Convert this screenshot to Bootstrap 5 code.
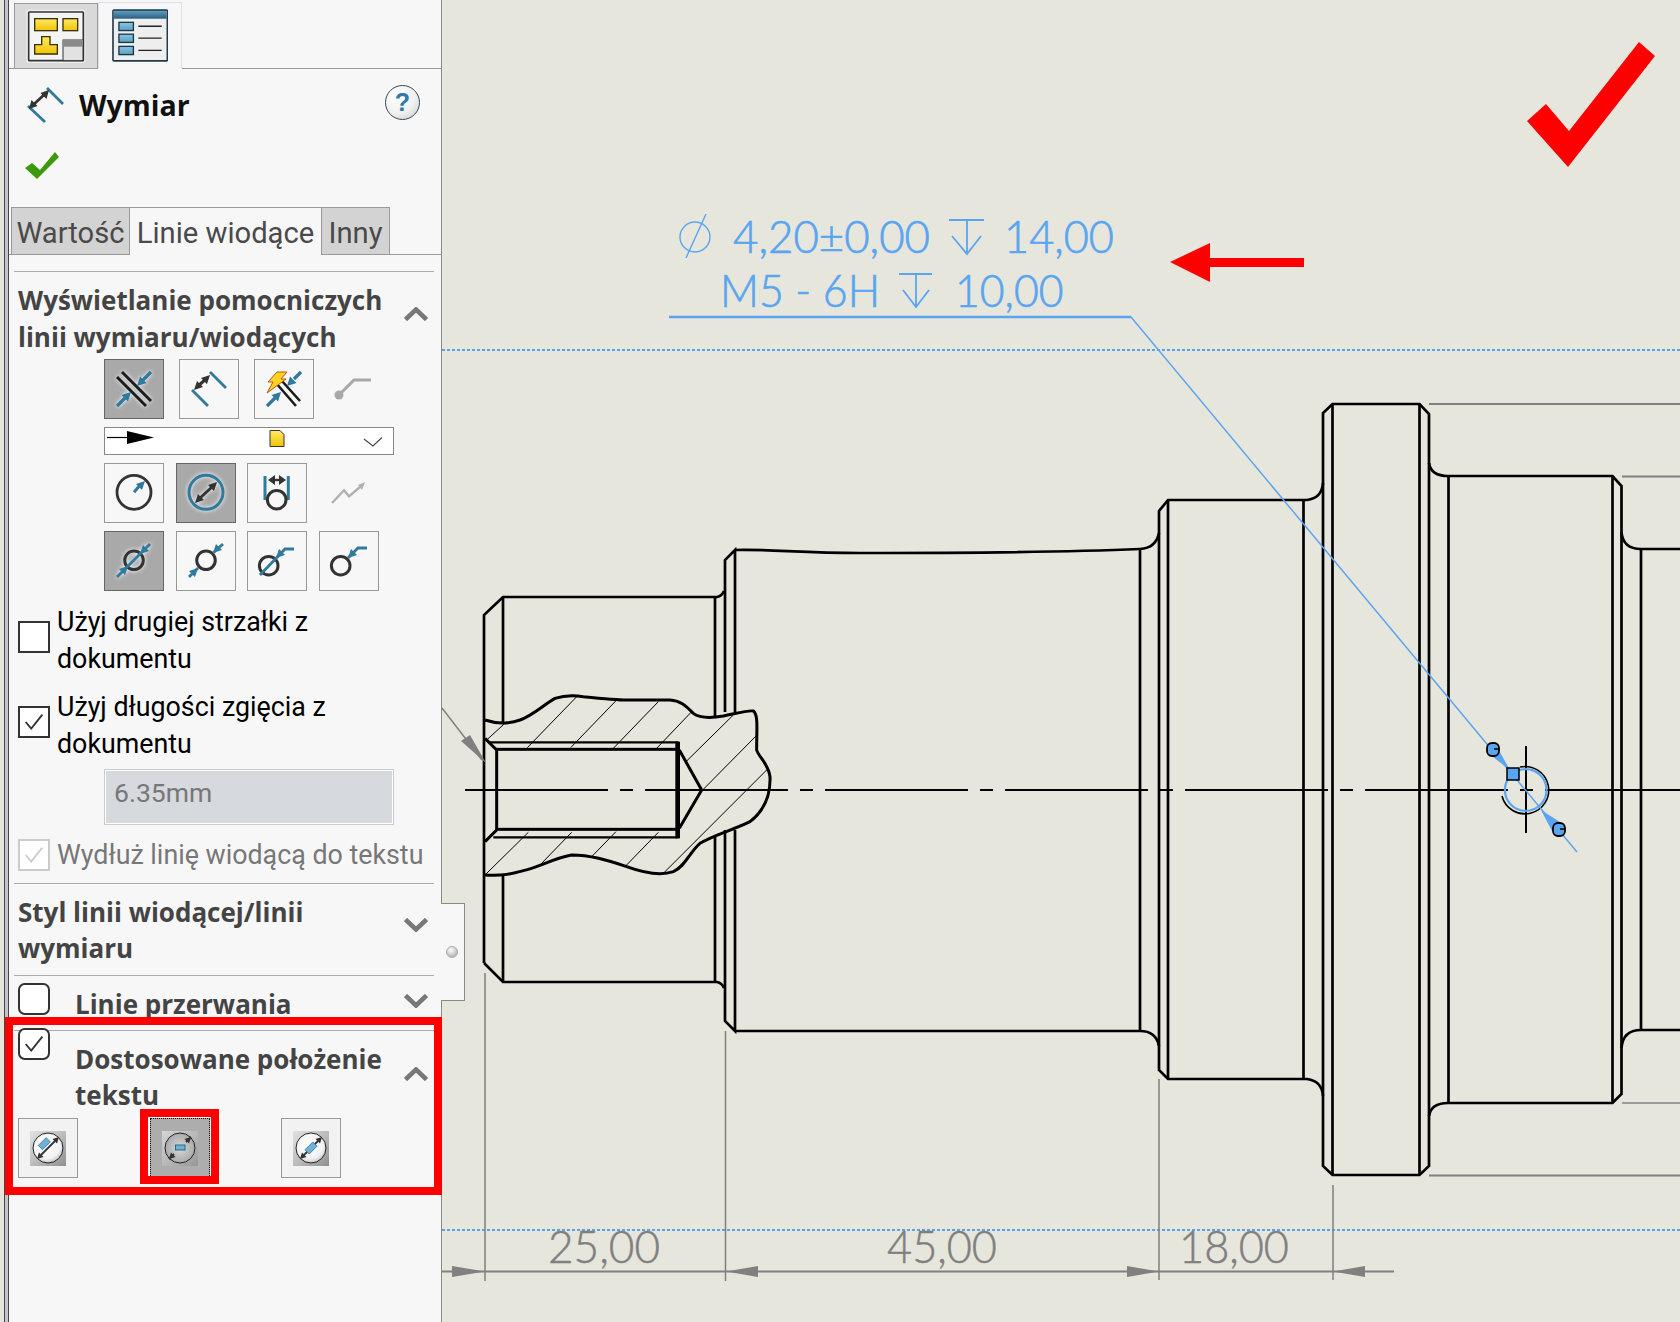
<!DOCTYPE html>
<html lang="pl">
<head>
<meta charset="utf-8">
<title>Wymiar</title>
<link href="https://cdn.jsdelivr.net/npm/bootstrap@5.3.0/dist/css/bootstrap.min.css" rel="stylesheet">
<style>
html,body{height:1322px;overflow:hidden}
body{background:#e6e6dd;font-family:Roboto,"Open Sans",sans-serif;color:#000}
.sw-shell{width:1680px;height:1322px;position:relative}
.pm{width:438px;height:1322px;margin-left:4px;flex:none;background:#f7f7f7;border-left:1px solid #444;border-right:1px solid #8a8a8a}
.pm-rail{width:4px;flex:none;background:#c2c5ce;border-right:1px solid #444}
.pm-body{width:432px;flex:none;font-size:26.800px;line-height:36.500px}
.pm-icontabs{height:69px;padding-left:5px;align-items:flex-end;border-bottom:1px solid #9a9a9a;--bs-nav-tabs-border-radius:0;flex-wrap:nowrap}
.pm-icontabs .nav-link{width:84px;height:66px;padding:0;border:1px solid #9a9a9a;border-radius:0;background:#d9d9d9;margin-bottom:-1px;display:flex;align-items:center;justify-content:center}
.pm-icontabs .nav-link.active{height:67px;background:#f7f7f7;border-bottom-color:#f7f7f7}
.pm-title{height:72px;padding:0 21px 0 17px}
.pm-title h1{font-family:"Open Sans",sans-serif;font-size:28.500px;font-weight:700;margin:0 0 0 15px;color:#111;line-height:36px}
.pm-help{width:35px;height:35px;border-radius:50%;border:1px solid #3b4a55;background:radial-gradient(circle at 35% 30%,#fff,#f0f0f0 55%,#c9c9c9);color:#2b7aa8;font:700 25px/33px "Liberation Sans",sans-serif;text-align:center;margin-top:-6px}
.pm-ok{height:66px;padding:5px 0 0 16px}
.pm-subtabs{height:48px;padding-left:2px;border-bottom:1px solid #9a9a9a;flex-wrap:nowrap;font-size:29.200px}
.pm-subtabs .nav-link{height:48px;padding:0;border:1px solid #9a9a9a;border-radius:0;margin-bottom:-1px;background:#d3d3d3;color:#4a4a4a;line-height:50px;white-space:nowrap;text-align:center}
.pm-subtabs .nav-link.active{background:#f7f7f7;border-color:#9a9a9a #9a9a9a #f7f7f7;border-left:0;border-right:0;color:#4a4a4a}
.tw1{width:119px}.tw2{width:191px}.tw3{width:69px}
.pm-sec{margin:0 7px 0 5px;border-top:1px solid #ababab;padding:0 0 0 4px}
.pm-sec.first{margin-top:16px}
.pm-head{padding-top:10px;font-family:"Open Sans",sans-serif;font-weight:700;color:#444;font-size:26px;margin:0}
.pm-head-box{display:flex;justify-content:space-between;align-items:center;padding-right:6px}
.pm-chev{width:24px;height:14px;flex:none}
.tool{width:60px;height:60px;padding:0;border:1px solid #999;border-radius:0;background:#f7f7f7;flex:none;display:block}
.tool svg{display:block;width:58px;height:58px}
.tool.active{background:#a9a9a9;border-color:#666}
.tool.active svg{filter:drop-shadow(0 0 2px #fff)}
.tool.off{border-color:transparent;background:transparent}
.tools{margin-left:86px}
.gap15{gap:15px}
.gap11{gap:11.500px}
.mt6px{margin-top:4px}
.mt8px{margin-top:8px}
.pm-drop{width:290px;height:28px;margin:8px 0 0 86px;background:#fff;border:1px solid #888}
.pm-drop svg{display:block}
.pm-check{display:flex;align-items:center;gap:7px;color:#000;white-space:nowrap}
.pm-check .form-check-input,.pm-box{width:32px;height:32px;margin:0;flex:none;border:2px solid #333;border-radius:0;background-color:#fff;opacity:1}
.form-check-input:checked{background-color:#fff;border-color:#333;background-size:26px 26px;background-image:url("data:image/svg+xml,%3Csvg xmlns='http://www.w3.org/2000/svg' viewBox='0 0 28 28'%3E%3Cpath d='M5 14l6 7 12-15' fill='none' stroke='%23333' stroke-width='2'/%3E%3C/svg%3E")}
.pm-check.dim{color:#777}
.pm-check.dim .form-check-input{border-color:#ccc;background-image:url("data:image/svg+xml,%3Csvg xmlns='http://www.w3.org/2000/svg' viewBox='0 0 28 28'%3E%3Cpath d='M5 14l6 7 12-15' fill='none' stroke='%23ccc' stroke-width='2'/%3E%3C/svg%3E")}
.pm-val{width:290px;height:56px;margin:7px 0 0 86px;border:1px solid #ccc;outline:0;box-shadow:inset 0 0 0 1px #fff;background:#d6d9de;color:#777;padding:0 0 9px 9px;border-radius:0;font-size:26.500px}
.pm-val:disabled{background:#d6d9de;opacity:1}
.c1{margin-top:13px}.c2{margin-top:12px}.c3{margin-top:12px;padding-bottom:9px}
.pm-check.c1 .form-check-input,.pm-check.c2 .form-check-input{margin-bottom:8px}
.pm-sec2{padding-bottom:8px}
.pm-sec3{height:55px;padding-top:7px;display:flex;align-items:flex-start}
.pm-sec3 .pm-head,.pm-sec4 .pm-head{padding:3px 0 0 25px;flex:1}
.pm-sec3 .pm-chev{margin:11px 6px 0 0}
.pm-sec4{position:relative}
.pm-sec4 .pm-row{display:flex;align-items:flex-start;padding-top:7px}
.pm-sec4 .form-check-input{margin-top:-10px}
.pm-sec4 .pm-chev{margin:29px 6px 0 0}
.tools2{margin-top:4px;gap:71.500px}
.tool.pale{background:#f2f2f2}
.tool.focusd{background:#adadad;border:1px dotted #000;box-shadow:0 0 0 1px #fff}
.pm-fly{position:absolute;left:441px;top:903px;width:24px;height:98px;background:#f7f7f7;border:1px solid #8a8a8a;border-left:0;z-index:2}
.pm-fly i{position:absolute;left:5px;top:42px;width:12px;height:12px;border-radius:50%;background:radial-gradient(circle at 40% 30%,#fff,#bbb 70%);border:1px solid #aaa}
.red-a{position:absolute;left:5px;top:1017px;width:437px;height:178px;border:8px solid #f00;z-index:3;pointer-events:none}
.red-b{position:absolute;left:140px;top:1109px;width:79px;height:75px;border:8px solid #f00;z-index:3;pointer-events:none}
.sheet{flex:none;width:1238px;height:1322px}
.sheet svg{display:block}
.ol{fill:none;stroke:#000;stroke-width:2.700}
.dim-l{stroke:#808080;fill:none}
.dim-t{font-family:"Lato","Liberation Sans",sans-serif;font-weight:300;font-size:46px;fill:#808080;stroke:#808080;stroke-width:.5px}
.blue-t{font-family:"Lato","Liberation Sans",sans-serif;font-weight:300;font-size:46px;fill:#5aa5f0;stroke:#5aa5f0;stroke-width:.7px}
</style>
</head>
<body>
<svg width="0" height="0" class="position-absolute">
<defs>
<linearGradient id="gs" x1="0" y1="0" x2="1" y2="1"><stop offset="0" stop-color="#e2e2e2"/><stop offset=".5" stop-color="#bdbdbd"/><stop offset="1" stop-color="#8f8f8f"/></linearGradient>
<radialGradient id="gw" cx=".45" cy=".4" r=".65"><stop offset="0" stop-color="#fff"/><stop offset=".7" stop-color="#f2f2f2"/><stop offset="1" stop-color="#bbb"/></radialGradient>
<radialGradient id="gg" cx=".5" cy=".5" r=".65"><stop offset="0" stop-color="#d8d8d8"/><stop offset="1" stop-color="#9c9c9c"/></radialGradient>
<linearGradient id="gy" x1="0" y1="0" x2="0" y2="1"><stop offset="0" stop-color="#ffe96a"/><stop offset="1" stop-color="#f0c400"/></linearGradient>
<linearGradient id="gb" x1="0" y1="0" x2="0" y2="1"><stop offset="0" stop-color="#8cc4de"/><stop offset="1" stop-color="#5b9fc2"/></linearGradient>
<linearGradient id="gh" x1="0" y1="0" x2="0" y2="1"><stop offset="0" stop-color="#5f9fc0"/><stop offset="1" stop-color="#2a5f80"/></linearGradient>
</defs>
</svg>
<div class="sw-shell d-flex">
<aside class="pm d-flex">
  <div class="pm-rail"></div>
  <div class="pm-body">
    <ul class="nav nav-tabs pm-icontabs">
      <li class="nav-item"><a class="nav-link" href="#" aria-label="Drzewo">
        <svg width="60" height="55" viewBox="78 23 180 165"><rect x="79" y="25" width="177" height="160" rx="8" fill="#eee"/><rect x="86" y="32" width="164" height="146" fill="#f4f4f4" stroke="#333" stroke-width="5" rx="2"/><g fill="url(#gy)" stroke="#3a3000" stroke-width="4"><rect x="104" y="52" width="68" height="36"/><rect x="189" y="52" width="44" height="36"/><path d="M104 158V130H125V106H150V130H172V158Z"/></g><rect x="189" y="116" width="60" height="62" fill="#e2e2e2" stroke="#333" stroke-width="3"/><rect x="189" y="116" width="60" height="20" fill="#8a8a8a"/></svg>
      </a></li>
      <li class="nav-item"><a class="nav-link active" href="#" aria-label="Właściwości">
        <svg width="56" height="53" viewBox="335 25 170 160"><rect x="338" y="28" width="165" height="154" fill="#eee" stroke="#223b4c" stroke-width="5" rx="3"/><rect x="340" y="30" width="161" height="24" fill="url(#gh)"/><g fill="url(#gb)" stroke="#14384d" stroke-width="4"><rect x="356" y="65" width="44" height="25"/><rect x="356" y="101" width="44" height="25"/><rect x="356" y="138" width="44" height="25"/></g><path d="M415 77h71M415 113h71M415 150h71" stroke="#222" stroke-width="4"/></svg>
      </a></li>
    </ul>
    <div class="pm-title d-flex align-items-center">
      <svg width="38" height="38" viewBox="0 0 38 38" class="flex-none"><path d="M2 20L19 36M21 2L37 18" fill="none" stroke="#2f7a9e" stroke-width="2.800"/><path d="M6 20L20 7" stroke="#333" stroke-width="2.800"/><path d="M23 4l-2.500 9-6-6zM3 23l2.500-9 6 6z" fill="#333"/></svg>
      <h1 class="flex-grow-1">Wymiar</h1>
      <div class="pm-help">?</div>
    </div>
    <div class="pm-ok"><svg width="35" height="28" viewBox="0 0 35 28"><path d="M0 16L7 11 15 18 30 0 34 5 12 27Z" fill="#3c9a0a"/></svg></div>
    <ul class="nav nav-tabs pm-subtabs">
      <li class="nav-item"><a class="nav-link tw1" href="#">Wartość</a></li>
      <li class="nav-item"><a class="nav-link active tw2" href="#">Linie wiodące</a></li>
      <li class="nav-item"><a class="nav-link tw3" href="#">Inny</a></li>
    </ul>
    <section class="pm-sec first">
      <div class="pm-head-box"><p class="pm-head">Wyświetlanie pomocniczych<br>linii wymiaru/wiodących</p>
        <svg class="pm-chev" viewBox="0 0 24 14"><path d="M1.500 12.500L12 2.500 22.500 12.500" fill="none" stroke="#777" stroke-width="4.600"/></svg></div>
      <div class="tools d-flex gap15 mt6px">
        <button type="button" class="btn tool active" aria-label="a"><svg viewBox="0 0 58 58"><g transform="translate(-1 -1)"><path d="M18 13L47 42M13 18L42 47" stroke="#1c1c1c" stroke-width="3"/><path d="M47 13L38 22M13 47L22 38" stroke="#2f7a9e" stroke-width="3.200"/><path d="M33 27l9.500-3-6.500-6.500zM27 33l-9.500 3 6.500 6.500z" fill="#2f7a9e"/></g></svg></button>
        <button type="button" class="btn tool" aria-label="b"><svg viewBox="0 0 58 58"><g transform="translate(-1 -1)"><path d="M13 31L29 47M31 13L47 29" fill="none" stroke="#2f7a9e" stroke-width="2.800"/><path d="M19 27L27 20" stroke="#333" stroke-width="3"/><path d="M31 16l-3 9-6-6zM15 31l3-9 6 6z" fill="#333"/></g></svg></button>
        <button type="button" class="btn tool" aria-label="c"><svg viewBox="0 0 58 58"><g transform="translate(-1 -1)"><path d="M28 22L46 42M22 24L42 47" stroke="#1c1c1c" stroke-width="2.600"/><path d="M47 13L40 20M13 47L21 39" stroke="#2f7a9e" stroke-width="3.200"/><path d="M33 27l9.500-3-6.500-6.500zM27 33l-9.500 3 6.500 6.500z" fill="#2f7a9e"/><path d="M23 13H33L27 20H32L13 34 19 23H14Z" fill="#ffd21f" stroke="#b8561a" stroke-width="1"/></g></svg></button>
        <button type="button" class="btn tool off" aria-label="d"><svg viewBox="0 0 58 58"><g transform="translate(-1 -1)"><circle cx="10" cy="36" r="4.500" fill="#a8a8a8"/><path d="M10 36L25 21H42" fill="none" stroke="#a8a8a8" stroke-width="3"/></g></svg></button>
      </div>
      <div class="pm-drop"><svg width="288" height="26" viewBox="0 0 288 26"><path d="M2 9.500H24" stroke="#000" stroke-width="1.200"/><path d="M22 3L49 9.500 22 16Z" fill="#000"/><path d="M165 2.500h10l4 4V18.500h-14Z" fill="url(#gy)" stroke="#333" stroke-width="1"/><path d="M259 11L268 18 277 9.500" fill="none" stroke="#444" stroke-width="1.100"/></svg></div>
      <div class="tools d-flex gap11 mt8px">
        <button type="button" class="btn tool" aria-label="e"><svg viewBox="0 0 58 58"><g transform="translate(-1 -1)"><circle cx="30" cy="29.300" r="17" fill="none" stroke="#333" stroke-width="2.800"/><path d="M30 29.300L37 21" stroke="#2f7a9e" stroke-width="3"/><path d="M41 18l-3 9-6-6z" fill="#2f7a9e"/></g></svg></button>
        <button type="button" class="btn tool active" aria-label="f"><svg viewBox="0 0 58 58"><g transform="translate(-1 -1)"><circle cx="30" cy="29.300" r="17" fill="none" stroke="#2f7a9e" stroke-width="3"/><path d="M24 35L36 24" stroke="#333" stroke-width="3"/><path d="M41 19l-3 9-6-6zM19 40l3-9 6 6z" fill="#333"/></g></svg></button>
        <button type="button" class="btn tool" aria-label="g"><svg viewBox="0 0 58 58"><g transform="translate(-1 -1)"><path d="M18 13V37M41.300 13V37" stroke="#2f7a9e" stroke-width="3"/><path d="M24 17H36" stroke="#333" stroke-width="2.400"/><path d="M21 17l7-5v10zM39 17l-7-5v10z" fill="#333"/><circle cx="29.700" cy="36.700" r="9.300" fill="none" stroke="#333" stroke-width="3"/></g></svg></button>
        <button type="button" class="btn tool off" aria-label="h"><svg viewBox="0 0 58 58"><g transform="translate(-1 -1)"><path d="M13 40L25 27.300 30 33.300 41 24" fill="none" stroke="#b0b0b0" stroke-width="2.400"/><path d="M46 19l-3 8-4-5z" fill="#b0b0b0"/></g></svg></button>
      </div>
      <div class="tools d-flex gap11 mt8px">
        <button type="button" class="btn tool active" aria-label="i"><svg viewBox="0 0 58 58"><g transform="translate(-1 -1)"><circle cx="30" cy="29.300" r="9.300" fill="none" stroke="#333" stroke-width="3"/><path d="M13 46L46 13" stroke="#2f7a9e" stroke-width="2.800"/><path d="M36 23l9-3-6-6zM24 35l-9 3 6 6z" fill="#2f7a9e"/></g></svg></button>
        <button type="button" class="btn tool" aria-label="j"><svg viewBox="0 0 58 58"><g transform="translate(-1 -1)"><circle cx="30" cy="29.300" r="9.300" fill="none" stroke="#333" stroke-width="3"/><path d="M13 46L22 37M37 22L47 13" stroke="#2f7a9e" stroke-width="2.800"/><path d="M37 22l9-3-6-6zM22 37l-9 3 6 6z" fill="#2f7a9e"/></g></svg></button>
        <button type="button" class="btn tool" aria-label="k"><svg viewBox="0 0 58 58"><g transform="translate(-1 -1)"><circle cx="21.700" cy="34.700" r="9.300" fill="none" stroke="#333" stroke-width="3"/><path d="M13 44L38 18 H47" fill="none" stroke="#2f7a9e" stroke-width="2.800"/><path d="M29 27l9-3-6-6z" fill="#2f7a9e"/></g></svg></button>
        <button type="button" class="btn tool" aria-label="l"><svg viewBox="0 0 58 58"><g transform="translate(-1 -1)"><circle cx="21.700" cy="34.700" r="9.300" fill="none" stroke="#333" stroke-width="3"/><path d="M29 27L39 17H48" fill="none" stroke="#2f7a9e" stroke-width="2.800"/><path d="M29 27l9-3-6-6z" fill="#2f7a9e"/></g></svg></button>
      </div>
      <label class="pm-check c1"><input class="form-check-input" type="checkbox"><span>Użyj drugiej strzałki z<br>dokumentu</span></label>
      <label class="pm-check c2"><input class="form-check-input" type="checkbox" checked><span>Użyj długości zgięcia z<br>dokumentu</span></label>
      <input class="form-control pm-val" type="text" value="6.35mm" disabled>
      <label class="pm-check dim c3"><input class="form-check-input" type="checkbox" checked disabled><span>Wydłuż linię wiodącą do tekstu</span></label>
    </section>
    <section class="pm-sec pm-sec2">
      <div class="pm-head-box"><p class="pm-head">Styl linii wiodącej/linii<br>wymiaru</p>
        <svg class="pm-chev" viewBox="0 0 24 14"><path d="M1.500 1.500L12 11.500 22.500 1.500" fill="none" stroke="#777" stroke-width="4.600"/></svg></div>
    </section>
    <section class="pm-sec pm-sec3">
      <input class="form-check-input pm-box" type="checkbox" aria-label="Linie przerwania">
      <p class="pm-head">Linie przerwania</p>
      <svg class="pm-chev" viewBox="0 0 24 14"><path d="M1.500 1.500L12 11.500 22.500 1.500" fill="none" stroke="#777" stroke-width="4.600"/></svg>
    </section>
    <section class="pm-sec pm-sec4">
      <div class="pm-row">
        <input class="form-check-input pm-box" type="checkbox" checked aria-label="Dostosowane położenie tekstu">
        <p class="pm-head">Dostosowane położenie<br>tekstu</p>
        <svg class="pm-chev" viewBox="0 0 24 14"><path d="M1.500 12.500L12 2.500 22.500 12.500" fill="none" stroke="#777" stroke-width="4.600"/></svg>
      </div>
      <div class="d-flex tools2">
        <button type="button" class="btn tool pale" aria-label="m"><svg viewBox="0 0 58 58"><rect x="11" y="12" width="36" height="35" fill="url(#gs)"/><circle cx="29" cy="29" r="15" fill="url(#gw)" stroke="#222" stroke-width="1"/><path d="M22 36L36 22" stroke="#333" stroke-width="1.800"/><path d="M40 18l-2 6.500-4.500-4.500zM18 40l2-6.500 4.500 4.500z" fill="#333"/><rect x="20" y="22" width="11" height="6" transform="rotate(-45 25 25)" fill="#6fb0d4" stroke="#2f7a9e" stroke-width=".8"/></svg></button>
        <button type="button" class="btn tool focusd" aria-label="n"><svg viewBox="0 0 58 58"><rect x="11" y="12" width="36" height="35" fill="url(#gs)" opacity=".75"/><circle cx="29" cy="29" r="15" fill="url(#gg)" stroke="#222" stroke-width="1"/><path d="M18 40L23 35M35 23L40 18" stroke="#333" stroke-width="1.800"/><path d="M40 18l-2 6.500-4.500-4.500zM18 40l2-6.500 4.500 4.500z" fill="#333"/><rect x="24.500" y="26" width="9.500" height="5" fill="#6fb0d4" stroke="#1f5f80" stroke-width=".9"/></svg></button>
        <button type="button" class="btn tool pale" aria-label="o"><svg viewBox="0 0 58 58"><rect x="11" y="12" width="36" height="35" fill="url(#gs)"/><circle cx="29" cy="29" r="15" fill="url(#gw)" stroke="#222" stroke-width="1"/><path d="M22 36L36 22" stroke="#333" stroke-width="1.800"/><path d="M40 18l-2 6.500-4.500-4.500zM18 40l2-6.500 4.500 4.500z" fill="#333"/><rect x="23.500" y="26" width="11" height="6" transform="rotate(-45 29 29)" fill="#6fb0d4" stroke="#2f7a9e" stroke-width=".8"/></svg></button>
      </div>
    </section>
  </div>
</aside>
<div class="pm-fly"><i></i></div>
<div class="red-a"></div>
<div class="red-b"></div>
<main class="sheet">
<svg width="1238" height="1322" viewBox="442 0 1238 1322">
  <path d="M442 350H1680M442 1230H1680" stroke="#5ba3e6" stroke-width="2" stroke-dasharray="3 2" fill="none"/>
  <path class="dim-l" stroke-width="1.500" d="M485 973V1281M725.500 1031V1281M1159 1079V1280M1333 1185V1280"/>
  <path class="dim-l" stroke-width="2" d="M442 1271.500H1394M1429 404H1680M1622 476.500H1680M1429 1175.500H1680"/>
  <path class="dim-l" stroke-width="1.500" d="M1622 1103H1680"/>
  <path fill="#808080" d="M452 1266L485 1271.500 452 1277ZM726 1271.500L758 1266V1277ZM1159 1271.500L1127 1266V1277ZM1333 1271.500L1365 1266V1277Z"/>
  <text class="dim-t" x="548" y="1263" textLength="112" lengthAdjust="spacingAndGlyphs">25,00</text>
  <text class="dim-t" x="887" y="1263" textLength="110" lengthAdjust="spacingAndGlyphs">45,00</text>
  <text class="dim-t" x="1179" y="1263" textLength="110" lengthAdjust="spacingAndGlyphs">18,00</text>
  <g transform="translate(440 580) scale(.33333)" fill="none" stroke="#000">
    <g stroke-width="3">
      <path d="M140 480L200 425M262 503L415 345M392 503L530 360M520 505L655 365M650 505L755 395M738 545L880 405M788 630L948 468M985 565L670 880M135 885L265 757M300 855L395 757M455 830L528 755M555 860L655 757"/>
    </g>
    <path stroke-width="9" d="M135 420C165 430 205 432 240 420C280 405 310 375 345 355C375 345 400 345 430 350C480 355 530 360 560 360H690C720 362 735 375 760 400C780 415 810 415 850 408C890 400 925 390 940 393C955 405 950 440 950 510C955 530 985 550 990 590C992 640 975 690 930 725C880 750 820 765 780 790C750 815 735 860 700 875C670 885 620 882 560 860C500 840 450 825 395 825C340 835 300 860 250 872C220 880 195 888 135 885"/>
    <path stroke-width="9" d="M135 475L170 510M135 785L170 750M718 510L785 630L718 745"/>
    <rect x="170" y="508" width="545" height="240" stroke-width="9"/>
    <path stroke-width="7" d="M150 487H715M160 772H715"/>
    <path stroke-width="14" d="M713 485V775"/>
  </g>
  <g class="ol">
    <path d="M484 963V615L503 597H717Q722 596 724 591"/>
    <path d="M484 963L503 982H717Q722 983 724 988"/>
    <path d="M503 597V723M503 876V982M715 597V717M715 837V982"/>
    <path d="M725 712V560L735 550V712M725 830V1021L735 1031V830"/>
    <path d="M735 550C770 549 800 553 860 553C960 553 1070 552 1140 549Q1156 548 1159 533V511L1168 500H1307Q1322 498 1323 483V413L1332.500 404H1419.500L1429 414V463Q1431 476 1448 476H1612.500L1621.500 486V532Q1623 549 1641 549H1680"/>
    <path d="M735 1031H1140Q1156 1031 1159 1046V1070L1168 1079H1307Q1322 1081 1323 1096V1166L1332.500 1175H1419.500L1429 1166V1116Q1431 1103 1448 1103H1612.500L1621.500 1094V1048Q1623 1030 1641 1030H1680"/>
    <path d="M1140 549V1030M1159 533V1046M1168 500V1079M1303.500 500V1079M1323 483V1096M1332.500 404V1175M1419.500 404V1175M1429 463V1116M1448.500 476V1103M1612.500 476V1103M1621.500 532V1048M1641 549V1030"/>
  </g>
  <path d="M465 790H1680" stroke="#000" stroke-width="2" stroke-dasharray="143 12 13 12"/>
  <path d="M442 708L482 760" stroke="#808080" stroke-width="1.500"/>
  <path d="M486 763L461 741 470 735Z" fill="#808080"/>
  <path d="M1526 746V833" stroke="#000" stroke-width="2"/>
  <path d="M1502 796A23.700 23.700 0 1 0 1520 767" fill="none" stroke="#000" stroke-width="1.600"/>
  <circle cx="1525.700" cy="790" r="20.800" fill="none" stroke="#5aa5f0" stroke-width="2.200"/>
  <path d="M669 317H1131L1577 852" fill="none" stroke="#5aa5f0" stroke-width="1.500"/>
  <path d="M669 317H1131" stroke="#5aa5f0" stroke-width="2.500"/>
  <path d="M1489 754L1497 747 1510 770ZM1541 810L1552 831 1560 822Z" fill="#5aa5f0"/>
  <rect x="1507" y="768" width="12" height="12" fill="#5aa5f0" stroke="#000" stroke-width="1.500"/>
  <g fill="#5aa5f0" stroke="#000" stroke-width="1.800"><rect x="1487" y="743" width="12" height="13" rx="5"/><rect x="1553" y="823" width="12" height="13" rx="5"/></g>
  <path d="M1494 749H1499M1560 829H1565" stroke="#000" stroke-width="1.500"/>
  <g fill="none" stroke="#5aa5f0" stroke-width="1.400">
    <circle cx="695" cy="237" r="15"/><path d="M706 214L686 258"/>
    <path d="M949 220H984M967 220V254M952 236L967 254 981 236" stroke-width="1.800"/>
    <path d="M899 274H932M916 274V307M903 290L916 307 929 290" stroke-width="1.800"/>
  </g>
  <text class="blue-t" x="733" y="253" textLength="197" lengthAdjust="spacingAndGlyphs">4,20±0,00</text>
  <text class="blue-t" x="1004" y="253" textLength="110" lengthAdjust="spacingAndGlyphs">14,00</text>
  <text class="blue-t" x="720" y="307" textLength="160" lengthAdjust="spacingAndGlyphs">M5 - 6H</text>
  <text class="blue-t" x="955" y="307" textLength="108.500" lengthAdjust="spacingAndGlyphs">10,00</text>
  <path d="M1170 262L1210 243V258H1304V267H1210V282Z" fill="#f00"/>
  <path d="M1527 121L1546 104 1569 131 1639 42 1655 56 1568 167Z" fill="#f00"/>
</svg>
</main>
</div>
</body>
</html>
